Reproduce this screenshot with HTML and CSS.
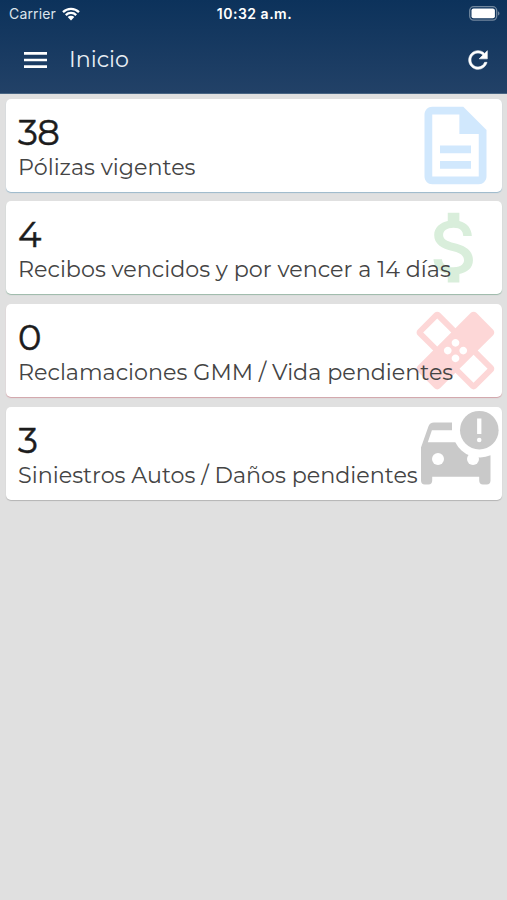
FILE: index.html
```
<!DOCTYPE html>
<html lang="es">
<head>
    <meta charset="UTF-8">
    <meta name="viewport" content="width=device-width, initial-scale=1.0">
    <title>Inicio</title>
    <link rel="stylesheet" href="styles.css">
</head>
<body>

<header class="header">
    <div class="status-bar">
        <div class="carrier">
            <span>Carrier</span>
            <svg class="wifi" viewBox="0 0 18 14">
                <path d="M1 5.2a11.5 11.5 0 0 1 16 0M3.8 8.1a7.4 7.4 0 0 1 10.4 0" fill="none" stroke="#fff" stroke-width="2.3"/>
                <path d="M5.7 10.1a4.7 4.7 0 0 1 6.6 0L9 13.5z" fill="#fff"/>
            </svg>
        </div>
        <span class="clock">10:32 a.m.</span>
        <svg class="battery" viewBox="0 0 31 15">
            <rect x=".7" y=".7" width="27" height="13.4" rx="4" fill="none" stroke="#71879e" stroke-width="1.3"/>
            <rect x="2.5" y="2.6" width="23.4" height="9.6" rx="2" fill="#fff"/>
            <path d="M29 5.2c2 .8 2 3.6 0 4.4z" fill="#71879e"/>
        </svg>
    </div>
    <nav class="toolbar">
        <svg class="menu" viewBox="0 0 23 16">
            <path d="M0 1.4h23M0 8h23M0 14.6h23" stroke="#fff" stroke-width="2.6"/>
        </svg>
        <h1 class="title">Inicio</h1>
        <svg class="refresh" viewBox="0 0 24 24">
            <path fill="#fff" stroke="#fff" stroke-width=".5" d="M17.65 6.35C16.2 4.9 14.21 4 12 4c-4.42 0-7.99 3.58-7.99 8s3.57 8 7.99 8c3.73 0 6.84-2.55 7.73-6h-2.08c-.82 2.33-3.04 4-5.65 4-3.31 0-6-2.69-6-6s2.69-6 6-6c1.66 0 3.14.69 4.22 1.78L13 11h7V4l-2.35 2.35z"/>
        </svg>
    </nav>
</header>

<main class="cards">
    <section class="card polizas">
        <svg class="icon" viewBox="0 0 24 24">
            <path d="M8 16h8v2H8zm0-4h8v2H8zm6-10H6c-1.1 0-2 .9-2 2v16c0 1.1.89 2 1.99 2H18c1.1 0 2-.9 2-2V8l-6-6zm4 18H6V4h7v5h5v11z"/>
        </svg>
        <div class="number">38</div>
        <div class="label">Pólizas vigentes</div>
    </section>

    <section class="card recibos">
        <svg class="icon" viewBox="0 0 24 24">
            <path d="M11.8 10.9c-2.27-.59-3-1.2-3-2.15 0-1.09 1.01-1.85 2.7-1.85 1.78 0 2.44.85 2.5 2.1h2.21c-.07-1.72-1.12-3.3-3.21-3.81V3h-3v2.16c-1.94.42-3.5 1.68-3.5 3.61 0 2.31 1.91 3.46 4.7 4.13 2.5.6 3 1.48 3 2.41 0 .69-.49 1.79-2.7 1.79-2.06 0-2.87-.92-2.98-2.1h-2.2c.12 2.19 1.76 3.42 3.68 3.83V21h3v-2.15c1.95-.37 3.5-1.5 3.5-3.55 0-2.84-2.43-3.81-4.7-4.4z"/>
        </svg>
        <div class="number">4</div>
        <div class="label">Recibos vencidos y por vencer a 14 días</div>
    </section>

    <section class="card reclamaciones">
        <svg class="icon" viewBox="0 0 24 24">
            <path d="M17.73 12.02l3.98-3.98c.39-.39.39-1.02 0-1.41l-4.34-4.34c-.39-.39-1.02-.39-1.41 0l-3.98 3.98L8 2.29C7.8 2.1 7.55 2 7.29 2c-.25 0-.51.1-.7.29L2.25 6.63c-.39.39-.39 1.02 0 1.41l3.98 3.98L2.25 16c-.39.39-.39 1.02 0 1.41l4.34 4.34c.39.39 1.02.39 1.41 0l3.98-3.98 3.98 3.98c.2.2.45.29.71.29.26 0 .51-.1.71-.29l4.34-4.34c.39-.39.39-1.02 0-1.41l-3.99-3.98zM12 9c.55 0 1 .45 1 1s-.45 1-1 1-1-.45-1-1 .45-1 1-1zm-4.71 1.96L3.66 7.34l3.63-3.63 3.62 3.62-3.62 3.63zM10 13c-.55 0-1-.45-1-1s.45-1 1-1 1 .45 1 1-.45 1-1 1zm2 2c-.55 0-1-.45-1-1s.45-1 1-1 1 .45 1 1-.45 1-1 1zm2-4c.55 0 1 .45 1 1s-.45 1-1 1-1-.45-1-1 .45-1 1-1zm2.66 9.34l-3.63-3.62 3.63-3.63 3.62 3.62-3.62 3.63z"/>
        </svg>
        <div class="number">0</div>
        <div class="label">Reclamaciones GMM / Vida pendientes</div>
    </section>

    <section class="card siniestros">
        <svg class="icon" viewBox="0 0 93 93">
            <path d="M43 15.5H25c-2.8 0-4.7 1.3-5.6 4L12 40.5v33.3a3.8 3.8 0 0 0 3.8 3.7h3.6a3.8 3.8 0 0 0 3.8-3.7v-4.1h47v4.1a3.8 3.8 0 0 0 3.8 3.7h3.7a3.8 3.8 0 0 0 3.8-3.7V48.2A27.3 27.3 0 0 1 46.3 35.2H18.8l4.1-12H43z"/>
            <circle class="hole" cx="29" cy="52" r="6"/>
            <circle class="hole" cx="64" cy="52" r="6"/>
            <circle cx="70.3" cy="23.2" r="19.3"/>
            <path class="hole" d="M68.1 11.5h4.3V27h-4.3z"/>
            <circle class="hole" cx="70.2" cy="33" r="2.3"/>
        </svg>
        <div class="number">3</div>
        <div class="label">Siniestros Autos / Daños pendientes</div>
    </section>
</main>

</body>
</html>
```
FILE: styles.css
```
* {
    box-sizing: border-box;
}
body {
    margin: 0;
    min-height: 100vh;
    background: #e0e0e0;
    font-family: Montserrat, Inter, sans-serif;
}
svg {
    display: block;
    flex: none;
}
.header {
    height: 94px;
    background: linear-gradient(#0c325b, #224167);
    color: #fff;
    border-bottom: 1px solid #486583;
}
.status-bar {
    display: grid;
    grid-template-columns: 1fr auto 1fr;
    align-items: center;
    height: 27px;
    padding: 0 7px 0 9px;
    font-family: Inter, sans-serif;
    font-size: 14px;
}
.carrier {
    display: flex;
    align-items: center;
    gap: 6px;
    color: #dce4ec;
    letter-spacing: 0.15px;
}
.wifi {
    width: 18px;
    height: 14px;
}
.clock {
    font-weight: 600;
    letter-spacing: 0.5px;
}
.battery {
    width: 31px;
    height: 15px;
    justify-self: end;
}
.toolbar {
    display: flex;
    align-items: center;
    height: 65px;
    padding: 0 15px 0 24px;
}
.menu {
    width: 23px;
    height: 16px;
}
.title {
    flex: 1;
    margin: 0 0 0 22px;
    font-size: 22.2px;
    font-weight: 400;
    color: #e8eef4;
}
.refresh {
    width: 28px;
    height: 28px;
}
.cards {
    display: flex;
    flex-direction: column;
    gap: 9.7px;
    padding: 4.6px 5px 0 6px;
}
.card {
    position: relative;
    height: 93px;
    padding: 12px;
    background: #fff;
    border-radius: 5px;
}
.icon {
    position: absolute;
    top: 0;
    right: 0;
    width: 93px;
    height: 93px;
}
.hole {
    fill: #fff;
}
.number {
    position: relative;
    height: 42px;
    line-height: 43px;
    font-size: 35.4px;
    font-weight: 400;
    letter-spacing: -0.8px;
    -webkit-text-stroke: 0.5px #1c1c1c;
    color: #1c1c1c;
}
.label {
    position: relative;
    width: max-content;
    line-height: 28px;
    font-size: 22.26px;
    color: #444;
    white-space: nowrap;
}
.polizas {
    fill: #d1e8fd;
    box-shadow: 0 1px 1px #9bb9cb;
}
.recibos {
    fill: #d9eedb;
    box-shadow: 0 1px 1px #9bb9a8;
}
.reclamaciones {
    fill: #fdd7d7;
    box-shadow: 0 1px 1px #d2a3a9;
}
.siniestros {
    fill: #c9c9c9;
    box-shadow: 0 1px 1px #b4b4b4;
}
```
